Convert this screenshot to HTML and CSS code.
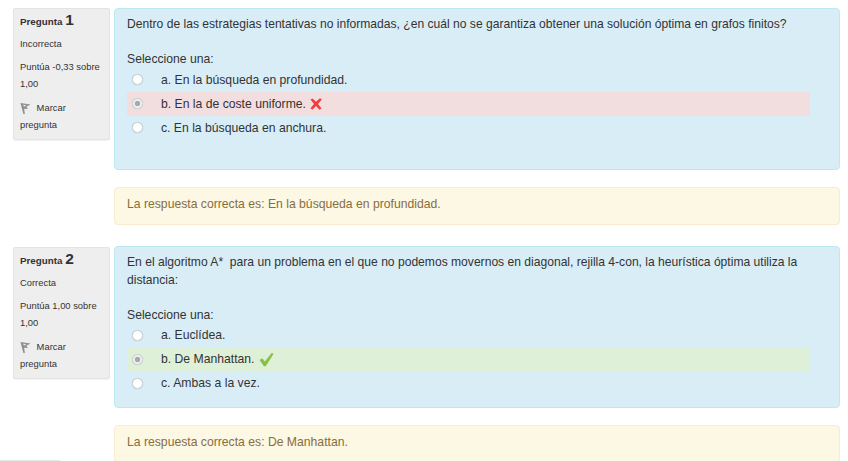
FILE: index.html
```html
<!DOCTYPE html>
<html lang="es">
<head>
<meta charset="utf-8">
<title>Cuestionario</title>
<link rel="stylesheet" href="styles.css">
</head>
<body>
<div class="page">
  <section class="que">
    <aside class="info">
      <h3 class="qno">Pregunta <span class="num">1</span></h3>
      <div class="state">Incorrecta</div>
      <div class="grade">Puntúa -0,33 sobre 1,00</div>
      <div class="flag"><svg class="flagicon" viewBox="0 0 12 14" width="11" height="13"><path d="M0.5 1 L11.5 2.5 L7 5 L8.5 7.5 L4.5 7.2 L5.3 13 L3.7 13 Z" fill="#8f8f8f"/><path d="M3 2.8 L7 3.3 L4.8 5 Z" fill="#e4e4e4"/></svg> Marcar pregunta</div>
    </aside>
    <div class="main">
      <div class="formulation">
        <p class="qtext">Dentro de las estrategias tentativas no informadas, ¿en cuál no se garantiza obtener una solución óptima en grafos finitos?</p>
        <p class="prompt">Seleccione una:</p>
        <div class="answers">
          <div class="opt"><span class="radio"></span><span>a. En la búsqueda en profundidad.</span></div>
          <div class="opt wrong"><span class="radio checked"></span><span>b. En la de coste uniforme.</span><svg class="mark" viewBox="0 0 12 12" width="12" height="12"><path d="M0.5 1.5 L2.5 0.5 L6 3.8 L10 0.2 L11.8 1.5 L8 6 L11.5 10.5 L9.5 11.8 L6 8 L2.3 11.8 L0.5 10.2 L4 6 Z" fill="#f23b3b"/></svg></div>
          <div class="opt"><span class="radio"></span><span>c. En la búsqueda en anchura.</span></div>
        </div>
      </div>
      <div class="feedback">La respuesta correcta es: En la búsqueda en profundidad.</div>
    </div>
  </section>
  <section class="que second">
    <aside class="info">
      <h3 class="qno">Pregunta <span class="num">2</span></h3>
      <div class="state">Correcta</div>
      <div class="grade">Puntúa 1,00 sobre 1,00</div>
      <div class="flag"><svg class="flagicon" viewBox="0 0 12 14" width="11" height="13"><path d="M0.5 1 L11.5 2.5 L7 5 L8.5 7.5 L4.5 7.2 L5.3 13 L3.7 13 Z" fill="#8f8f8f"/><path d="M3 2.8 L7 3.3 L4.8 5 Z" fill="#e4e4e4"/></svg> Marcar pregunta</div>
    </aside>
    <div class="main">
      <div class="formulation">
        <p class="qtext">En el algoritmo A*&nbsp; para un problema en el que no podemos movernos en diagonal, rejilla 4-con, la heurística óptima utiliza la distancia:</p>
        <p class="prompt">Seleccione una:</p>
        <div class="answers">
          <div class="opt"><span class="radio"></span><span>a. Euclídea.</span></div>
          <div class="opt right"><span class="radio checked"></span><span>b. De Manhattan.</span><svg class="mark" viewBox="0 0 14 14" width="15" height="15"><path d="M0.5 7.5 L3 5.8 L5.5 8.8 L12 0.8 L13.5 1.8 L6.3 13.2 L4.6 13.2 Z" fill="#84c341"/></svg></div>
          <div class="opt"><span class="radio"></span><span>c. Ambas a la vez.</span></div>
        </div>
      </div>
      <div class="feedback">La respuesta correcta es: De Manhattan.</div>
    </div>
  </section>
</div>
<div class="corner"></div>
</body>
</html>
```
FILE: styles.css
```css
html, body {
  margin: 0;
  padding: 0;
  height: 461px;
  overflow: hidden;
  background: #fff;
}
body {
  font-family: "Liberation Sans", Arial, sans-serif;
  font-size: 12.2px;
  line-height: 18px;
  color: #333;
}
.page {
  padding: 8px 8px 0 13px;
}
.que {
  display: flex;
  gap: 4px;
  align-items: flex-start;
}
.que.second {
  margin-top: 21px;
}
.info {
  width: 97px;
  height: 132px;
  box-sizing: border-box;
  padding: 3px 9px 0 6px;
  background: #eee;
  border: 1px solid #e3e3e3;
  border-radius: 2px;
  font-size: 9.4px;
  line-height: 17px;
  box-shadow: 0 1px 1px rgba(0, 0, 0, .05);
}
.second .info {
  margin-top: 1px;
}
.qno {
  margin: 0;
  font-size: 9.8px;
  font-weight: bold;
  line-height: 19px;
  color: #333;
}
.num {
  font-size: 15.5px;
  line-height: 1;
}
.state {
  margin-top: 4px;
}
.grade {
  margin-top: 6px;
}
.flag {
  margin-top: 7px;
}
.flagicon {
  vertical-align: -4px;
  margin-right: 3px;
}
.main {
  width: 726px;
}
.formulation {
  box-sizing: border-box;
  height: 162px;
  padding: 6px 12px 0;
  background: #d9edf7;
  border: 1px solid #bce8f1;
  border-radius: 4px;
}
.qtext {
  margin: 0 0 17px;
  font-size: 12.1px;
}
.prompt {
  margin: 0;
}
.second .answers {
  margin-top: -1px;
}
.opt {
  display: flex;
  align-items: center;
  height: 24px;
  width: 683px;
  padding: 0 0 1px 5px;
  box-sizing: border-box;
}
.second .opt {
  padding-bottom: 0;
}
.wrong {
  background: #f2dede;
}
.right {
  background: #dff0d8;
}
.radio {
  flex: none;
  box-sizing: border-box;
  width: 11px;
  height: 11px;
  margin-right: 18px;
  border-radius: 50%;
  background: #fff;
  border: 1px solid #c9d4da;
  box-shadow: 0 0 1px rgba(0, 0, 0, .2);
}
.radio.checked {
  background: radial-gradient(circle, #a8a8a8 0 2.4px, #eee 3px);
}
.mark {
  margin-left: 4px;
}
.feedback {
  box-sizing: border-box;
  height: 38px;
  margin-top: 17px;
  padding: 7px 12px;
  background: #fcf8e3;
  border: 1px solid #faebcc;
  border-radius: 4px;
  color: #8a6d3b;
}
.corner {
  position: absolute;
  left: 0;
  bottom: 0;
  width: 60px;
  height: 1px;
  background: #e6e6e6;
}
```
